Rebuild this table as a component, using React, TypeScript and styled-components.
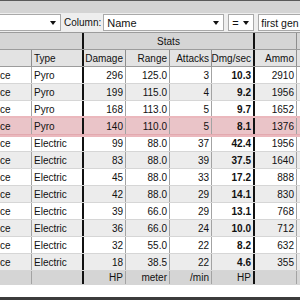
import React from "react";
import styled, { createGlobalStyle, css } from "styled-components";

const GlobalStyle = createGlobalStyle`
  html, body { margin: 0; padding: 0; background: #ffffff; }
  body { font-family: "Liberation Sans", Arial, sans-serif; font-size: 10px; color: #111; }
  * { box-sizing: border-box; }
`;

const Window = styled.div`
  width: 300px;
  height: 300px;
  overflow: hidden;
  display: flex;
  flex-direction: column;
  background: #ffffff;
  border-top: 1px solid #5a5a5a;
`;

const TitleBand = styled.div`
  height: 12px;
  flex: none;
  background: #d4d4d4;
`;

const FilterBar = styled.div`
  height: 20px;
  flex: none;
  display: flex;
  align-items: center;
  background: #eeeeee;
  border-bottom: 1px solid #9c9c9c;
`;

const Combo = styled.div<{ $w: number; $gap: number; $clipLeft?: boolean }>`
  width: ${(p) => p.$w}px;
  margin-left: ${(p) => p.$gap}px;
  height: 17px;
  flex: none;
  display: flex;
  align-items: center;
  justify-content: space-between;
  padding: 0 4px 0 3px;
  background: #ffffff;
  border: 1px solid #a9a9a9;
  ${(p) => p.$clipLeft && css`border-left: none;`}
  font-size: 11px;
`;

const TextInput = styled.div<{ $gap: number }>`
  flex: 1;
  margin-left: ${(p) => p.$gap}px;
  height: 17px;
  display: flex;
  align-items: center;
  padding: 0 2px;
  background: #ffffff;
  border: 1px solid #a9a9a9;
  border-right: none;
  font-size: 10.5px;
  white-space: nowrap;
`;

const Arrow = styled.span`
  width: 0;
  height: 0;
  border-left: 3.5px solid transparent;
  border-right: 3.5px solid transparent;
  border-top: 4px solid #111;
  margin-top: 1px;
`;

const Label = styled.span<{ $gap: number }>`
  margin-left: ${(p) => p.$gap}px;
  flex: none;
  font-size: 10px;
`;

const COLS = "32px 52px 42px 44px 42px 43px 42px 1fr";

const Row = styled.div<{ $bg?: string; $hl?: boolean; $h?: number; $line?: string }>`
  display: grid;
  grid-template-columns: ${COLS};
  height: ${(p) => p.$h ?? 17}px;
  flex: none;
  background: ${(p) => p.$bg ?? "#ffffff"};
  border-bottom: 1px solid ${(p) => p.$line ?? "#d6d6d6"};
  ${(p) =>
    p.$hl &&
    css`
      position: relative;
      z-index: 1;
      background: #eac4c8;
      border-bottom-color: #e2a9af;
      box-shadow: 0 -1px 0 1px #ebb8bd, 0 1px 0 1px #ebb8bd;
    `}
`;

const Cell = styled.div<{ $right?: boolean; $bold?: boolean; $thick?: boolean; $span?: number; $center?: boolean; $line?: string }>`
  grid-column: span ${(p) => p.$span ?? 1};
  display: flex;
  align-items: center;
  justify-content: ${(p) => (p.$center ? "center" : p.$right ? "flex-end" : "flex-start")};
  padding: 0 2px 0 2px;
  overflow: hidden;
  white-space: nowrap;
  font-weight: ${(p) => (p.$bold ? 700 : 400)};
  border-right: ${(p) => (p.$thick ? "2px solid #111" : `1px solid ${p.$line ?? "#a3a3a3"}`)};
`;

const NameCell = styled(Cell)`
  padding-left: 0;
`;

const Filler = styled.div`
  flex: 1;
  background: #ffffff;
`;

const BottomEdge = styled.div`
  height: 3px;
  flex: none;
  background: #3c3c3c;
`;

type Item = {
  name: string;
  type: string;
  damage: number;
  range: string;
  attacks: number;
  dps: string;
  ammo: number;
  hl?: boolean;
};

const items: Item[] = [
  { name: "ce", type: "Pyro", damage: 296, range: "125.0", attacks: 3, dps: "10.3", ammo: 2910 },
  { name: "ce", type: "Pyro", damage: 199, range: "115.0", attacks: 4, dps: "9.2", ammo: 1956 },
  { name: "ce", type: "Pyro", damage: 168, range: "113.0", attacks: 5, dps: "9.7", ammo: 1652 },
  { name: "ce", type: "Pyro", damage: 140, range: "110.0", attacks: 5, dps: "8.1", ammo: 1376, hl: true },
  { name: "ce", type: "Electric", damage: 99, range: "88.0", attacks: 37, dps: "42.4", ammo: 1956 },
  { name: "ce", type: "Electric", damage: 83, range: "88.0", attacks: 39, dps: "37.5", ammo: 1640 },
  { name: "ce", type: "Electric", damage: 45, range: "88.0", attacks: 33, dps: "17.2", ammo: 888 },
  { name: "ce", type: "Electric", damage: 42, range: "88.0", attacks: 29, dps: "14.1", ammo: 830 },
  { name: "ce", type: "Electric", damage: 39, range: "66.0", attacks: 29, dps: "13.1", ammo: 768 },
  { name: "ce", type: "Electric", damage: 36, range: "66.0", attacks: 24, dps: "10.0", ammo: 712 },
  { name: "ce", type: "Electric", damage: 32, range: "55.0", attacks: 22, dps: "8.2", ammo: 632 },
  { name: "ce", type: "Electric", damage: 18, range: "38.5", attacks: 22, dps: "4.6", ammo: 355 },
];

export default function App() {
  return (
    <>
      <GlobalStyle />
      <Window>
        <TitleBand />
        <FilterBar>
          <Combo $w={61} $gap={0} $clipLeft>
            <span />
            <Arrow />
          </Combo>
          <Label $gap={3}>Column:</Label>
          <Combo $w={121} $gap={2}>
            <span>Name</span>
            <Arrow />
          </Combo>
          <Combo $w={26} $gap={4}>
            <span>=</span>
            <Arrow />
          </Combo>
          <TextInput $gap={4}>first gen</TextInput>
        </FilterBar>

        <Row $bg="#d5d5d5" $line="#9c9c9c">
          <Cell $span={2} $thick />
          <Cell $span={4} $thick $center>Stats</Cell>
          <Cell $line="#8e8e8e" />
          <Cell />
        </Row>
        <Row $bg="#e3e3e3" $line="#9c9c9c">
          <Cell $line="#8e8e8e" />
          <Cell $thick>Type</Cell>
          <Cell $right $line="#8e8e8e">Damage</Cell>
          <Cell $right $line="#8e8e8e">Range</Cell>
          <Cell $right $line="#8e8e8e">Attacks</Cell>
          <Cell $right $thick>Dmg/sec</Cell>
          <Cell $right $line="#8e8e8e">Ammo</Cell>
          <Cell />
        </Row>

        {items.map((it, i) => (
          <Row key={i} $bg={i % 2 === 1 ? "#ececec" : "#ffffff"} $hl={it.hl}>
            <NameCell>{it.name}</NameCell>
            <Cell $thick>{it.type}</Cell>
            <Cell $right>{it.damage}</Cell>
            <Cell $right>{it.range}</Cell>
            <Cell $right>{it.attacks}</Cell>
            <Cell $right $bold $thick>{it.dps}</Cell>
            <Cell $right>{it.ammo}</Cell>
            <Cell />
          </Row>
        ))}

        <Row $bg="#d5d5d5" $h={14} $line="#d5d5d5">
          <Cell />
          <Cell $thick />
          <Cell $right>HP</Cell>
          <Cell $right>meter</Cell>
          <Cell $right>/min</Cell>
          <Cell $right $thick>HP</Cell>
          <Cell />
          <Cell />
        </Row>
        <Filler />
        <BottomEdge />
      </Window>
    </>
  );
}
